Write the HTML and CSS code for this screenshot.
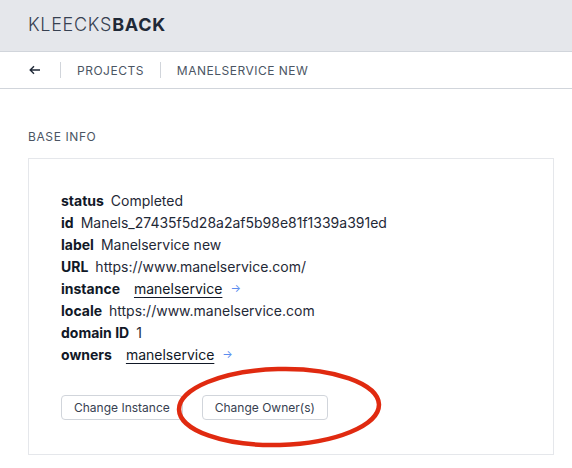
FILE: index.html
```html
<!DOCTYPE html>
<html>
<head>
<meta charset="utf-8">
<link rel="stylesheet" href="styles.css">
</head>
<body>
<header class="topbar">
  <div class="logo">KLEECKS<b>BACK</b></div>
</header>
<nav class="crumbs">
  <span class="back"><svg width="12" height="10" viewBox="0 0 12 10"><path d="M11 5H1.5M5 1.2L1.2 5L5 8.8" fill="none" stroke="#1f2937" stroke-width="1.4"/></svg></span>
  <span class="sep"></span>
  <span class="crumb">PROJECTS</span>
  <span class="sep"></span>
  <span class="crumb">MANELSERVICE NEW</span>
</nav>
<main class="content">
  <h2 class="section-title">BASE INFO</h2>
  <section class="card">
    <dl class="info">
      <div class="row"><dt>status</dt><dd>Completed</dd></div>
      <div class="row"><dt>id</dt><dd>Manels_27435f5d28a2af5b98e81f1339a391ed</dd></div>
      <div class="row"><dt>label</dt><dd>Manelservice new</dd></div>
      <div class="row"><dt>URL</dt><dd>https://www.manelservice.com/</dd></div>
      <div class="row"><dt>instance</dt><dd class="link"><a>manelservice</a><span class="go">→</span></dd></div>
      <div class="row"><dt>locale</dt><dd>https://www.manelservice.com</dd></div>
      <div class="row"><dt>domain ID</dt><dd>1</dd></div>
      <div class="row"><dt>owners</dt><dd class="link"><a>manelservice</a><span class="go">→</span></dd></div>
    </dl>
    <div class="actions">
      <button class="btn">Change Instance</button>
      <button class="btn">Change Owner(s)</button>
    </div>
  </section>
</main>
<svg class="annot" width="210" height="86" viewBox="0 0 210 86"><ellipse cx="104" cy="43" rx="100" ry="38" fill="none" stroke="#e02a10" stroke-width="4.5" transform="rotate(-1.5 104 43)"/></svg>
</body>
</html>
```
FILE: styles.css
```css
* { box-sizing: border-box; }
html, body { margin: 0; padding: 0; }
body {
  font-family: Inter, "Noto Sans", sans-serif;
  color: #111827;
  background: #fff;
  width: 572px;
  height: 468px;
  overflow: hidden;
  position: relative;
}
.topbar {
  height: 52px;
  background: #e5e7eb;
  border-bottom: 1px solid #d1d5db;
  display: flex;
  align-items: center;
  padding-left: 28px;
  padding-bottom: 2px;
}
.logo {
  font-size: 18px;
  color: #374151;
  letter-spacing: 0.7px;
  font-weight: 300;
}
.logo b { font-weight: 700; color: #1f2937; }
.crumbs {
  height: 37px;
  border-bottom: 1px solid #d1d5db;
  display: flex;
  align-items: center;
  padding-left: 29px;
}
.back { display: flex; align-items: center; width: 12px; }
.sep {
  width: 1px;
  height: 16px;
  background: #d1d5db;
  margin: 0 16px 0 19px;
}
.crumb + .sep { margin-left: 16px; }
.crumb {
  font-size: 12px;
  letter-spacing: 0.5px;
  color: #4b5563;
}
.content { padding: 40px 18px 0 28px; }
.section-title {
  margin: 0 0 13px;
  font-size: 12px;
  font-weight: 400;
  letter-spacing: 0.6px;
  color: #4b5563;
  line-height: 16px;
}
.card {
  border: 1px solid #e5e7eb;
  height: 297px;
  padding: 30px 32px 0;
}
.info { margin: 0; font-size: 14px; }
.row { display: flex; height: 22px; align-items: center; }
dt { font-weight: 700; color: #111827; }
dd { margin: 0 0 0 7px; color: #1f2937; }
dd.link { margin-left: 14px; display: flex; align-items: center; }
dd.link a { text-decoration: underline; text-underline-offset: 3px; color: #111827; }
.go { color: #5b8def; font-size: 11px; margin-left: 8px; }
.actions {
  display: flex;
  gap: 19px;
  margin-top: 30px;
}
.btn {
  font-family: inherit;
  font-size: 12px;
  color: #374151;
  background: #fff;
  border: 1px solid #d1d5db;
  border-radius: 4px;
  height: 25px;
  padding: 0 12px;
}
.annot { position: absolute; left: 175px; top: 364px; }
```
